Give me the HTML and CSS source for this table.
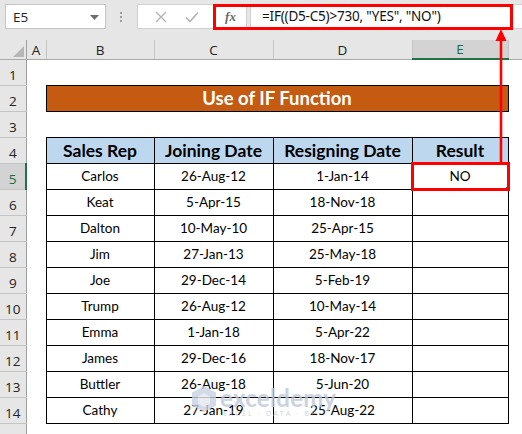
FILE: index.html
```html
<!DOCTYPE html>
<html>
<head>
<meta charset="utf-8">
<link rel="stylesheet" href="styles.css">
</head>
<body>
<div class="app">
  <div class="fbar">
    <div class="namebox"><span>E5</span><svg class="caret" width="9" height="5" viewBox="0 0 9 5"><path d="M0 0H9L4.5 5Z" fill="#6d6d6d"/></svg></div>
    <div class="grip"><i></i><i></i><i></i></div>
    <div class="btns">
      <svg width="12" height="12" viewBox="0 0 12 12"><path d="M1 1L11 11M11 1L1 11" stroke="#b4b4b4" stroke-width="1.4" fill="none"/></svg>
      <svg width="14" height="12" viewBox="0 0 14 12"><path d="M1 6.5L5 10.5L13 1.5" stroke="#b4b4b4" stroke-width="1.6" fill="none"/></svg>
    </div>
    <div class="fx">fx</div>
    <div class="formula">=IF((D5-C5)&gt;730, "YES", "NO")</div>
  </div>

  <table class="sheet">
    <colgroup>
      <col class="c-rh"><col class="c-a"><col class="c-b"><col class="c-c"><col class="c-d"><col class="c-e"><col class="c-f">
    </colgroup>
    <tr class="hdr">
      <th class="corner"><span class="tri"></span></th><th>A</th><th>B</th><th>C</th><th>D</th><th class="sel">E</th><th class="last"></th>
    </tr>
    <tr><th class="rh">1</th><td></td><td></td><td></td><td></td><td></td><td></td></tr>
    <tr><th class="rh">2</th><td></td><td class="title" colspan="4">Use of IF Function</td><td></td></tr>
    <tr><th class="rh">3</th><td></td><td></td><td></td><td></td><td></td><td></td></tr>
    <tr><th class="rh">4</th><td></td><td class="th">Sales Rep</td><td class="th">Joining Date</td><td class="th">Resigning Date</td><td class="th">Result</td><td></td></tr>
    <tr><th class="rh rsel">5</th><td></td><td class="d">Carlos</td><td class="d">26-Aug-12</td><td class="d">1-Jan-14</td><td class="d active">NO<span class="handle"></span></td><td></td></tr>
    <tr><th class="rh">6</th><td></td><td class="d">Keat</td><td class="d">5-Apr-15</td><td class="d">18-Nov-18</td><td class="d"></td><td></td></tr>
    <tr><th class="rh">7</th><td></td><td class="d">Dalton</td><td class="d">10-May-10</td><td class="d">25-Apr-15</td><td class="d"></td><td></td></tr>
    <tr><th class="rh">8</th><td></td><td class="d">Jim</td><td class="d">27-Jan-13</td><td class="d">25-May-18</td><td class="d"></td><td></td></tr>
    <tr><th class="rh">9</th><td></td><td class="d">Joe</td><td class="d">29-Dec-14</td><td class="d">5-Feb-19</td><td class="d"></td><td></td></tr>
    <tr><th class="rh">10</th><td></td><td class="d">Trump</td><td class="d">26-Aug-12</td><td class="d">10-May-14</td><td class="d"></td><td></td></tr>
    <tr><th class="rh">11</th><td></td><td class="d">Emma</td><td class="d">1-Jan-18</td><td class="d">5-Apr-22</td><td class="d"></td><td></td></tr>
    <tr><th class="rh">12</th><td></td><td class="d">James</td><td class="d">29-Dec-16</td><td class="d">18-Nov-17</td><td class="d"></td><td></td></tr>
    <tr><th class="rh">13</th><td></td><td class="d">Buttler</td><td class="d">26-Aug-18</td><td class="d">5-Jun-20</td><td class="d"></td><td></td></tr>
    <tr><th class="rh">14</th><td></td><td class="d">Cathy</td><td class="d">27-Jan-19</td><td class="d">25-Aug-22</td><td class="d"></td><td></td></tr>
    <tr><th class="rh"></th><td></td><td></td><td></td><td></td><td></td><td></td></tr>
  </table>

  <div class="watermark">
    <svg class="wm-logo" width="26" height="28" viewBox="0 0 26 28"><path d="M13 1L25 7.5V20.5L13 27L1 20.5V7.5Z" fill="#c9d3e3"/><path d="M13 8L19 11.5V18.5L13 22L7 18.5V11.5Z" fill="#e4e9f1"/></svg>
    <div class="wm-text"><span class="wm-name">exceldemy</span><span class="wm-tag">EXCEL · DATA · BI</span></div>
  </div>

  <div class="redbox rb-formula"></div>
  <div class="redbox rb-cell"></div>
  <svg class="arrow" width="14" height="136" viewBox="0 0 14 136"><path d="M7 10V136" stroke="#f00" stroke-width="2.6"/><path d="M7 0L12.5 12H1.5Z" fill="#f00"/></svg>
</div>
</body>
</html>
```

FILE: styles.css
```css
* { box-sizing: border-box; }
html, body { margin: 0; padding: 0; }
body { width: 522px; height: 434px; overflow: hidden; background: #fff; }
.app { position: relative; width: 522px; height: 434px; overflow: hidden; }

.fbar {
  display: flex; align-items: flex-start;
  height: 40px; padding-top: 4px;
  background: #e6e6e6;
  font-family: "Open Sans", "Noto Sans", sans-serif;
}
.namebox {
  margin-left: 5px; width: 101px; height: 25px;
  background: #fff; border: 1px solid #c6c6c6;
  display: flex; align-items: center; justify-content: space-between;
  padding: 0 6px 0 7px;
  font-size: 13.5px; color: #222;
}
.caret { margin-top: 1px; }
.grip { width: 4px; margin-left: 14px; margin-top: 8px; display: flex; flex-direction: column; gap: 2px; }
.grip i { display: block; width: 2px; height: 2px; background: #9e9e9e; }
.btns {
  margin-left: 13px; width: 77px; height: 25px;
  background: #fff; border: 1px solid #d0d0d0; border-right: none;
  display: flex; align-items: center; justify-content: space-around; padding: 0 6px 0 8px;
}
.fx {
  width: 33px; height: 25px; background: #fff; border: 1px solid #d0d0d0;
  font-family: "Liberation Serif", serif; font-style: italic; font-weight: bold;
  font-size: 13px; color: #6a6a6a; text-align: center; line-height: 23px;
}
.formula {
  margin-left: 3px; flex: 1; height: 25px; background: #fff;
  border: 1px solid #d0d0d0; border-right: none;
  padding-left: 11px; font-size: 13.5px; line-height: 23px; color: #111;
  font-family: "Noto Sans", sans-serif; letter-spacing: -0.2px;
}

.sheet {
  border-collapse: collapse; table-layout: fixed; width: 522px;
  font-family: Lato, "Open Sans", sans-serif;
}
.c-rh { width: 26px; } .c-a { width: 20px; } .c-b { width: 108px; }
.c-c { width: 119px; } .c-d { width: 139px; } .c-e { width: 96px; } .c-f { width: 14px; }

.sheet tr { height: 26px; }
.sheet tr.hdr { height: 19px; }
.sheet td, .sheet th { padding: 0; }
.hdr th {
  background: #e6e6e6; border-right: 1px solid #c4c4c4; border-bottom: 1px solid #a9a9a9;
  font-family: "Open Sans", sans-serif; font-weight: normal; font-size: 13.5px; color: #222;
  text-align: center; vertical-align: bottom; line-height: 17px;
}
.hdr th.sel { background: #d3d3d3; color: #1d6b3f; border-bottom: 2px solid #217346; }
.hdr th.last { border-right: none; }
.hdr th.corner { position: relative; border-right: 1px solid #9e9e9e; }
.tri {
  position: absolute; right: 2px; bottom: 2px; width: 0; height: 0;
  border-left: 11px solid transparent; border-bottom: 11px solid #b7b7b7;
}
.rh {
  background: #e6e6e6; border-right: 1px solid #9e9e9e; border-bottom: 1px solid #c4c4c4;
  font-family: "Open Sans", sans-serif; font-weight: normal; font-size: 13.5px; color: #222;
  text-align: center; vertical-align: bottom; line-height: 20px;
}
.rh.rsel { background: #d3d3d3; color: #1d6b3f; border-right: 2px solid #217346; }

.title {
  background: #c55a11; border: 1px solid #000; color: #fff;
  font-weight: bold; font-size: 18.5px; text-align: center; vertical-align: middle;
}
.th {
  background: #bdd7ee; border: 1px solid #000; font-weight: bold; font-size: 17.5px;
  text-align: center; color: #000;
}
.d { border: 1px solid #000; font-size: 13.5px; text-align: center; color: #000; }
.active { position: relative; }
.handle { position: absolute; right: -2px; bottom: -2px; width: 4px; height: 4px; background: #217346; }

.watermark {
  position: absolute; left: 191px; top: 385px;
  display: flex; align-items: flex-start; gap: 3px; opacity: 0.8;
}
.wm-text { display: flex; flex-direction: column; margin-top: 1px; }
.wm-name { font-family: Lato, sans-serif; font-weight: bold; font-size: 24px; line-height: 23px; color: #bdc8dc; letter-spacing: 0.3px; }
.wm-tag { font-family: "Open Sans", sans-serif; font-size: 7px; letter-spacing: 2.2px; color: #c3cbda; margin-left: 3px; line-height: 9px; }

.redbox { position: absolute; border: 3px solid #f00; }
.rb-formula { left: 213px; top: 4px; width: 300px; height: 26px; }
.rb-cell { left: 411px; top: 162px; width: 99px; height: 29px; }
.arrow { position: absolute; left: 494px; top: 29px; }
```
